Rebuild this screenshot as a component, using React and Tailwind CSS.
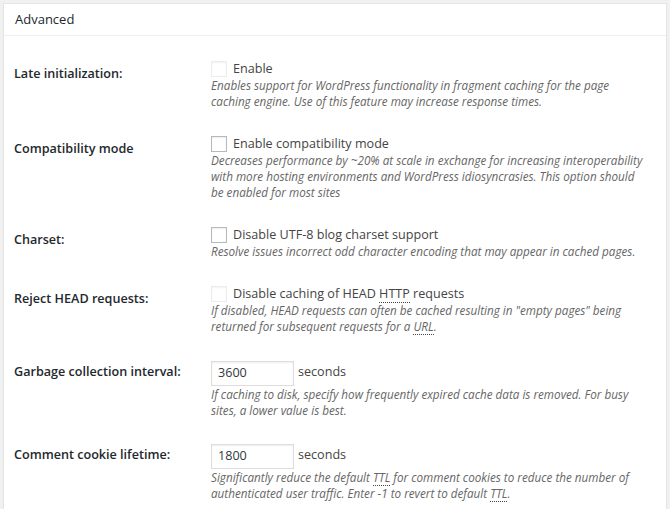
import React from 'react';

const Abbr = ({ children }) => (
  <span className="border-b border-dotted border-[#444]">{children}</span>
);

const Checkbox = ({ disabled }) => (
  <span
    className={`inline-block w-4 h-4 shrink-0 border bg-white shadow-[inset_0_1px_2px_rgba(0,0,0,0.07)] ${
      disabled ? 'border-[#e5e5e5] opacity-70' : 'border-[#b4b9be]'
    }`}
  />
);

const Row = ({ label, control, input, children }) => (
  <div className="flex py-[13px]">
    <div
      className={`w-[207px] shrink-0 pl-[10px] text-[12.6px] leading-[18px] font-semibold text-[#23282d] ${
        input ? 'pt-[2px]' : 'pt-[3.5px]'
      }`}
    >
      {label}
    </div>
    <div className="flex-1 min-w-0 pr-[20px]">
      {control}
      <p className={`text-[11.7px] leading-[16px] italic text-[#666] ${input ? '' : 'mb-[1px]'}`}>
        {children}
      </p>
    </div>
  </div>
);

const CheckLine = ({ text, disabled }) => (
  <label className="flex items-center gap-[6px] h-4 text-[12.6px] text-[#444]">
    <Checkbox disabled={disabled} />
    <span>{text}</span>
  </label>
);

const NumberLine = ({ value }) => (
  <div className="flex items-center h-[25px] gap-[4px] text-[12.6px] text-[#444]">
    <div className="w-[83px] h-[25px] border border-[#ddd] bg-white shadow-[inset_0_1px_2px_rgba(0,0,0,0.07)] pl-[6px] flex items-center text-[#32373c]">
      {value}
    </div>
    <span className="-mt-[2px]">seconds</span>
  </div>
);

export default function App() {
  return (
    <div
      className="w-[670px] h-[509px] overflow-hidden bg-[#f1f1f1] pt-[3px] pl-[3px]"
      style={{ fontFamily: '"Open Sans", "Noto Sans", sans-serif' }}
    >
      <div className="w-[664px] h-[520px] bg-white border border-[#e5e5e5] shadow-[0_1px_1px_rgba(0,0,0,0.04)]">
        <div className="h-[32px] border-b border-[#eee] pl-[11px] flex items-center text-[13px] text-[#23282d]">
          Advanced
        </div>
        <div className="pt-[12px]">
          <Row label="Late initialization:" control={<CheckLine text="Enable" disabled />}>
            Enables support for WordPress functionality in fragment caching for the page caching engine. Use of this feature may increase response times.
          </Row>
          <Row label="Compatibility mode" control={<CheckLine text="Enable compatibility mode" />}>
            Decreases performance by ~20% at scale in exchange for increasing interoperability with more hosting environments and WordPress idiosyncrasies. This option should be enabled for most sites
          </Row>
          <Row label="Charset:" control={<CheckLine text="Disable UTF-8 blog charset support" />}>
            Resolve issues incorrect odd character encoding that may appear in cached pages.
          </Row>
          <Row
            label="Reject HEAD requests:"
            control={
              <CheckLine
                disabled
                text={
                  <>
                    Disable caching of HEAD <Abbr>HTTP</Abbr> requests
                  </>
                }
              />
            }
          >
            If disabled, HEAD requests can often be cached resulting in "empty pages" being returned for subsequent requests for a <Abbr>URL</Abbr>.
          </Row>
          <Row label="Garbage collection interval:" input control={<NumberLine value="3600" />}>
            If caching to disk, specify how frequently expired cache data is removed. For busy sites, a lower value is best.
          </Row>
          <Row label="Comment cookie lifetime:" input control={<NumberLine value="1800" />}>
            Significantly reduce the default <Abbr>TTL</Abbr> for comment cookies to reduce the number of authenticated user traffic. Enter -1 to revert to default <Abbr>TTL</Abbr>.
          </Row>
        </div>
      </div>
    </div>
  );
}
